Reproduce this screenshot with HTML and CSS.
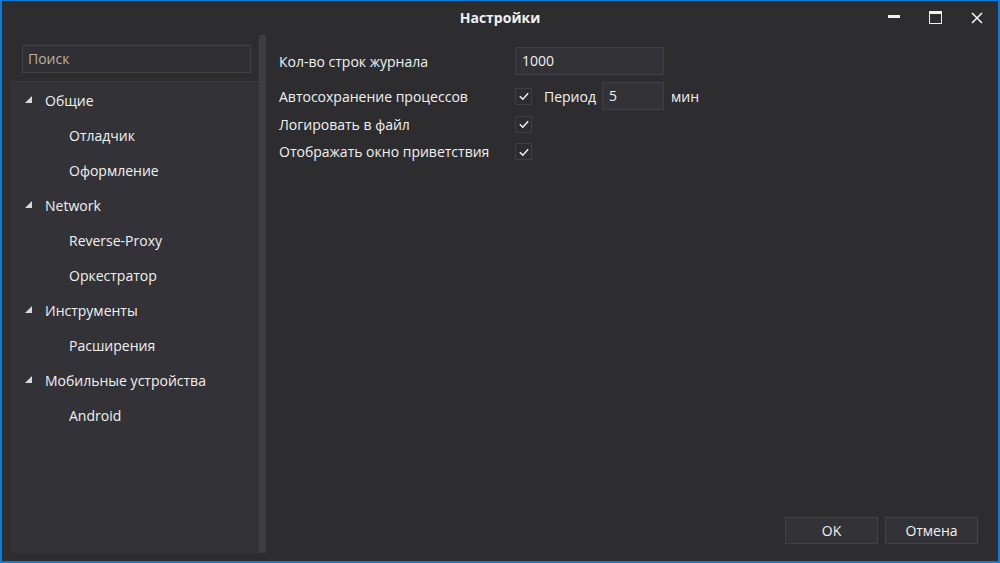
FILE: index.html
```html
<!DOCTYPE html>
<html lang="ru">
<head>
<meta charset="utf-8">
<title>Настройки</title>
<link rel="stylesheet" href="styles.css">
</head>
<body>
<div class="window">
  <div class="titlebar">
    <div class="title">Настройки</div>
    <div class="controls">
      <span class="ctl"><span class="min"></span></span>
      <span class="ctl"><span class="max"></span></span>
      <span class="ctl">
        <svg width="12" height="12" viewBox="0 0 12 12"><path d="M1 1 L11 11 M11 1 L1 11" stroke="#f1f1f1" stroke-width="1.6" fill="none"/></svg>
      </span>
    </div>
  </div>
  <div class="main">
    <div class="sidebar">
      <div class="search-wrap">
        <div class="search">Поиск</div>
      </div>
      <ul class="tree">
        <li class="node"><svg class="tri" width="7" height="7" viewBox="0 0 7 7"><polygon points="7,0 7,7 0,7" fill="#d8d8d8"/></svg>Общие</li>
        <li class="leaf">Отладчик</li>
        <li class="leaf">Оформление</li>
        <li class="node"><svg class="tri" width="7" height="7" viewBox="0 0 7 7"><polygon points="7,0 7,7 0,7" fill="#d8d8d8"/></svg>Network</li>
        <li class="leaf">Reverse-Proxy</li>
        <li class="leaf">Оркестратор</li>
        <li class="node"><svg class="tri" width="7" height="7" viewBox="0 0 7 7"><polygon points="7,0 7,7 0,7" fill="#d8d8d8"/></svg>Инструменты</li>
        <li class="leaf">Расширения</li>
        <li class="node"><svg class="tri" width="7" height="7" viewBox="0 0 7 7"><polygon points="7,0 7,7 0,7" fill="#d8d8d8"/></svg>Мобильные устройства</li>
        <li class="leaf">Android</li>
      </ul>
    </div>
    <div class="scrollbar"></div>
    <div class="content">
      <div class="form">
        <div class="row r1">
          <span class="label">Кол-во строк журнала</span>
          <span class="input wide">1000</span>
        </div>
        <div class="row r2">
          <span class="label">Автосохранение процессов</span>
          <span class="check"><svg width="16" height="16" viewBox="0 0 16 16"><path d="M3.8 8.2 L6.8 11.2 L12.2 5.2" stroke="#f1f1f1" stroke-width="1.5" fill="none"/></svg></span>
          <span class="period">Период</span>
          <span class="input narrow">5</span>
          <span class="unit">мин</span>
        </div>
        <div class="row r3">
          <span class="label">Логировать в файл</span>
          <span class="check"><svg width="16" height="16" viewBox="0 0 16 16"><path d="M3.8 8.2 L6.8 11.2 L12.2 5.2" stroke="#f1f1f1" stroke-width="1.5" fill="none"/></svg></span>
        </div>
        <div class="row r4">
          <span class="label">Отображать окно приветствия</span>
          <span class="check"><svg width="16" height="16" viewBox="0 0 16 16"><path d="M3.8 8.2 L6.8 11.2 L12.2 5.2" stroke="#f1f1f1" stroke-width="1.5" fill="none"/></svg></span>
        </div>
      </div>
      <div class="buttons">
        <button class="btn">OK</button>
        <button class="btn">Отмена</button>
      </div>
    </div>
  </div>
</div>
</body>
</html>
```
FILE: styles.css
```css
* { box-sizing: border-box; }
html, body { margin: 0; padding: 0; }
body {
  background: #2d2d30;
  font-family: "Open Sans", "Noto Sans", sans-serif;
  font-size: 14px;
  color: #f1f1f1;
}
.window {
  width: 1000px;
  height: 563px;
  background: #2d2d30;
  border-style: solid;
  border-color: #0a7bd8;
  border-width: 1px 2px 2px 2px;
  display: flex;
  flex-direction: column;
}
.titlebar {
  height: 34px;
  position: relative;
  display: flex;
  align-items: center;
  justify-content: center;
}
.title {
  font-weight: 700;
  font-size: 14px;
  color: #f1f1f1;
  margin-top: -2px;
}
.controls {
  position: absolute;
  right: 0;
  top: 0;
  height: 33px;
  display: flex;
}
.ctl {
  width: 42px;
  height: 33px;
  display: flex;
  align-items: center;
  justify-content: center;
}
.ctl:nth-child(1) { width: 40px; }
.min {
  display: block;
  width: 12px;
  height: 3px;
  background: #f1f1f1;
  margin-top: -2px;
}
.max {
  display: block;
  width: 13px;
  height: 13px;
  border: 1px solid #f1f1f1;
  border-top-width: 3px;
  margin-top: 0;
}
.ctl:nth-child(3) svg { margin-top: 1px; }
.main {
  flex: 1;
  display: flex;
  padding: 0 0 8px 8px;
}
.sidebar {
  width: 249px;
  display: flex;
  flex-direction: column;
}
.search-wrap {
  height: 47px;
  padding: 10px 8px 0 12px;
  border-bottom: 1px solid #3a3a3e;
}
.search {
  height: 28px;
  border: 1px solid #434346;
  background: #2f2f33;
  color: #b9b2a6;
  padding: 0 5px;
  line-height: 26px;
  font-size: 14px;
}
.tree {
  flex: 1;
  list-style: none;
  margin: 0;
  padding: 0;
  background: #333337;
}
.tree li {
  height: 35px;
  display: flex;
  align-items: center;
  color: #f1f1f1;
  padding-top: 2px;
}
.node { padding-left: 15px; }
.tri { margin-right: 13px; margin-top: -3px; }
.leaf { padding-left: 59px; }
.scrollbar {
  width: 7px;
  background: #3e3e42;
}
.content {
  flex: 1;
  display: flex;
  flex-direction: column;
  justify-content: space-between;
  padding: 12px 20px 9px 13px;
}
.row {
  display: flex;
  align-items: center;
}
.r1 { height: 28px; margin-bottom: 7px; }
.r2 { height: 28px; }
.r3 { height: 28px; }
.r4 { height: 27px; }
.label { width: 236px; flex: none; }
.input {
  height: 28px;
  border: 1px solid #3f3f46;
  background: #333337;
  padding: 0 6px;
  line-height: 26px;
  flex: none;
}
.wide { width: 149px; }
.narrow { width: 62px; }
.check {
  width: 17px;
  height: 17px;
  border: 1px solid #3f3f46;
  background: #2d2d30;
  display: flex;
  align-items: center;
  justify-content: center;
  flex: none;
}
.check svg { flex: none; }
.period { margin-left: 12px; width: 58px; flex: none; }
.unit { margin-left: 7px; }
.buttons {
  display: flex;
  justify-content: flex-end;
  gap: 7px;
}
.btn {
  width: 93px;
  height: 27px;
  border: 1px solid #434346;
  background: #333337;
  color: #f1f1f1;
  font-family: inherit;
  font-size: 14px;
  padding: 0;
}
```
